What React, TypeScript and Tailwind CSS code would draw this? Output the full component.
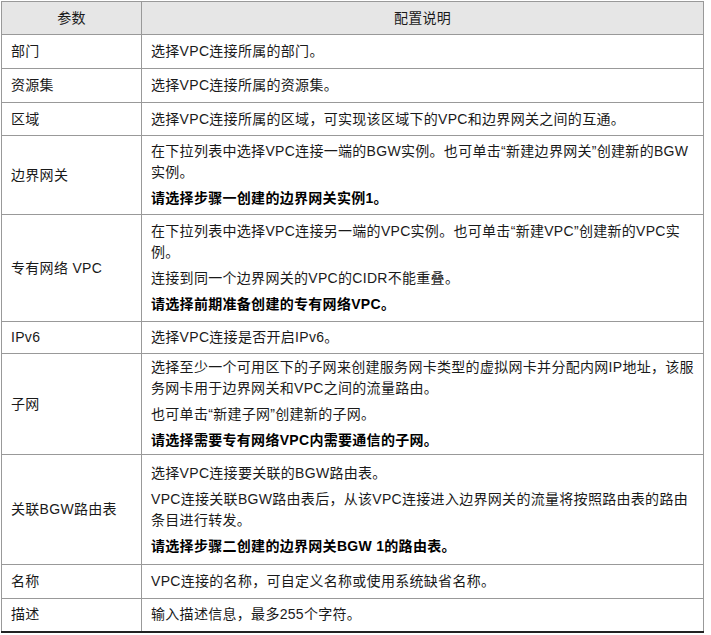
const rows: { name: string; h: string; paras: { t: string; b?: boolean }[] }[] = [
  { name: '部门', h: 'h-[34px]', paras: [{ t: '选择VPC连接所属的部门。' }] },
  { name: '资源集', h: 'h-[34px]', paras: [{ t: '选择VPC连接所属的资源集。' }] },
  { name: '区域', h: 'h-[33px]', paras: [{ t: '选择VPC连接所属的区域，可实现该区域下的VPC和边界网关之间的互通。' }] },
  {
    name: '边界网关',
    h: 'h-[79px]',
    paras: [
      { t: '在下拉列表中选择VPC连接一端的BGW实例。也可单击“新建边界网关”创建新的BGW实例。' },
      { t: '请选择步骤一创建的边界网关实例1。', b: true },
    ],
  },
  {
    name: '专有网络 VPC',
    h: 'h-[107px]',
    paras: [
      { t: '在下拉列表中选择VPC连接另一端的VPC实例。也可单击“新建VPC”创建新的VPC实例。' },
      { t: '连接到同一个边界网关的VPC的CIDR不能重叠。' },
      { t: '请选择前期准备创建的专有网络VPC。', b: true },
    ],
  },
  { name: 'IPv6', h: 'h-[32px]', paras: [{ t: '选择VPC连接是否开启IPv6。' }] },
  {
    name: '子网',
    h: 'h-[101px]',
    paras: [
      { t: '选择至少一个可用区下的子网来创建服务网卡类型的虚拟网卡并分配内网IP地址，该服务网卡用于边界网关和VPC之间的流量路由。' },
      { t: '也可单击“新建子网”创建新的子网。' },
      { t: '请选择需要专有网络VPC内需要通信的子网。', b: true },
    ],
  },
  {
    name: '关联BGW路由表',
    h: 'h-[110px]',
    paras: [
      { t: '选择VPC连接要关联的BGW路由表。' },
      { t: 'VPC连接关联BGW路由表后，从该VPC连接进入边界网关的流量将按照路由表的路由条目进行转发。' },
      { t: '请选择步骤二创建的边界网关BGW 1的路由表。', b: true },
    ],
  },
  { name: '名称', h: 'h-[34px]', paras: [{ t: 'VPC连接的名称，可自定义名称或使用系统缺省名称。' }] },
  { name: '描述', h: 'h-[33px]', paras: [{ t: '输入描述信息，最多255个字符。' }] },
];

export default function App() {
  return (
    <div className="w-[711px] h-[635px] bg-white pl-[1px] pt-[1px]" style={{ fontFamily: '"Liberation Sans", "Noto Sans CJK SC", sans-serif' }}>
      <table className="w-[703px] table-fixed border-collapse text-[14px] leading-[21px] tracking-[0.3px] text-[#1a1a1a] border-b-2 border-b-[#222]">
        <thead>
          <tr className="h-[33px] bg-[#e6e6e6]">
            <th className="w-[140px] border border-[#999] font-normal text-center">参数</th>
            <th className="border border-[#999] font-normal text-center">配置说明</th>
          </tr>
        </thead>
        <tbody>
          {rows.map((r) => (
            <tr key={r.name} className={r.h}>
              <td className="border border-[#999] px-[9px] align-middle">{r.name}</td>
              <td className="border border-[#999] pl-[9px] pr-[6px] align-middle">
                <div className="flex flex-col gap-[5px]">
                  {r.paras.map((p, i) => (
                    <p key={i} className={p.b ? 'font-bold text-black' : ''}>{p.t}</p>
                  ))}
                </div>
              </td>
            </tr>
          ))}
        </tbody>
      </table>
    </div>
  );
}
